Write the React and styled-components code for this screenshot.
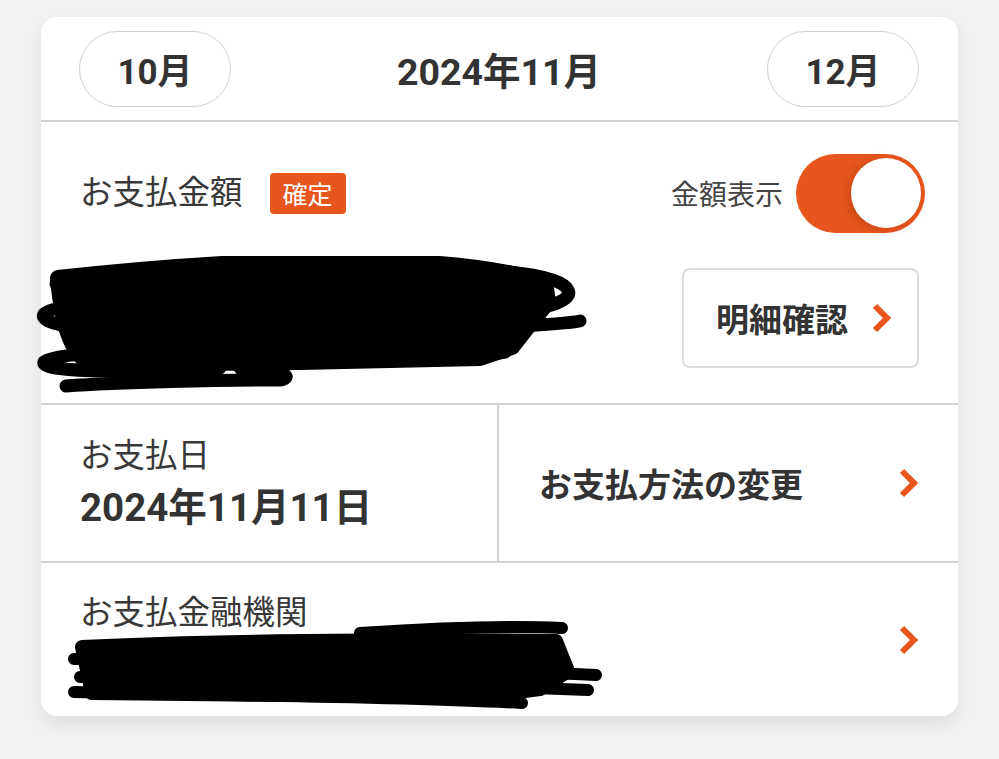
import React from "react";
import styled, { createGlobalStyle } from "styled-components";

const ORANGE = "#e8561e";

const GlobalStyle = createGlobalStyle`
  body {
    margin: 0;
    background: #f1f1f1;
    font-family: "Roboto", "Noto Sans CJK JP", sans-serif;
    color: #333;
  }
`;

const Page = styled.div`
  padding: 17px 0 40px 41px;
`;

const Card = styled.div`
  width: 917px;
  background: #fff;
  border-radius: 16px;
  box-shadow: 0 8px 16px rgba(0, 0, 0, 0.07);
  overflow: visible;
`;

const Header = styled.div`
  height: 103px;
  display: flex;
  align-items: center;
  justify-content: space-between;
  padding: 0 39px 0 38px;
  border-bottom: 2px solid #d2d2d2;
`;

const MonthPill = styled.button`
  width: 152px;
  height: 76px;
  border: 1.5px solid #d0d0d0;
  border-radius: 38px;
  background: #fff;
  font-family: inherit;
  font-size: 35px;
  font-weight: 700;
  color: #333;
  padding: 0;
`;

const Title = styled.div`
  font-size: 37.5px;
  font-weight: 700;
  color: #333;
`;

const AmountSection = styled.div`
  padding: 31px 0 35px 0;
  border-bottom: 2px solid #d2d2d2;
`;

const AmountTop = styled.div`
  height: 80px;
  display: flex;
  align-items: center;
  padding: 0 33px 0 39px;
`;

const Label = styled.div`
  font-size: 32.5px;
  line-height: ${p => p.$lh || 44}px;
  color: #383838;
`;

const Badge = styled.span`
  margin-left: 27px;
  height: 41px;
  padding: 0 13px;
  display: inline-flex;
  align-items: center;
  background: ${ORANGE};
  color: #fff;
  font-size: 25px;
  border-radius: 4px;
`;

const ToggleWrap = styled.div`
  margin-left: auto;
  display: flex;
  align-items: center;
  gap: 13px;
  font-size: 28px;
  color: #444;
`;

const Toggle = styled.div`
  width: 129px;
  height: 79px;
  border-radius: 40px;
  background: ${ORANGE};
  display: flex;
  align-items: center;
  justify-content: flex-end;
  padding-right: 4px;
  box-sizing: border-box;
`;

const Knob = styled.div`
  width: 70px;
  height: 70px;
  border-radius: 50%;
  background: #fff;
  box-shadow: -4px 2px 8px rgba(120, 30, 0, 0.25);
`;

const AmountBody = styled.div`
  margin-top: 35px;
  display: flex;
  align-items: flex-start;
  padding-right: 39px;
`;

const Scribble = styled.svg`
  display: block;
  margin: ${p => p.$margin};
  flex-shrink: 0;
`;

const DetailButton = styled.button`
  margin-left: auto;
  width: 237px;
  height: 100px;
  border: 2px solid #dcdcdc;
  border-radius: 8px;
  background: #fff;
  display: flex;
  align-items: center;
  justify-content: flex-end;
  gap: 24px;
  padding: 0 24px 0 0;
  font-family: inherit;
  font-size: 33px;
  font-weight: 700;
  color: #333;
`;

const SplitRow = styled.div`
  display: grid;
  grid-template-columns: 458px 1fr;
  height: 156px;
  border-bottom: 2px solid #d2d2d2;
`;

const DateCell = styled.div`
  border-right: 2px solid #d2d2d2;
  padding-left: 39px;
  display: flex;
  flex-direction: column;
  justify-content: center;
  gap: 6px;
`;

const DateValue = styled.div`
  font-size: 38.5px;
  line-height: 48px;
  font-weight: 700;
  color: #333;
`;

const LinkCell = styled.div`
  display: flex;
  align-items: center;
  justify-content: space-between;
  padding: 0 38px 0 40px;
  font-size: 33px;
  font-weight: 700;
  color: #333;
`;

const BankRow = styled.div`
  display: flex;
  align-items: center;
  padding: 0 38px 0 39px;
  height: 153px;
`;

const BankInfo = styled.div`
  display: flex;
  flex-direction: column;
  align-self: flex-start;
  padding-top: 30px;
`;

const ChevronSlot = styled.div`
  margin-left: auto;
  display: flex;
`;

const Chevron = () => (
  <svg width="21" height="30" viewBox="0 0 21 30">
    <polyline
      points="3,3 15,15 3,27"
      fill="none"
      stroke={ORANGE}
      strokeWidth="6"
      strokeLinejoin="miter"
    />
  </svg>
);

// redacted amount, hand scribble
const AmountScribble = () => (
  <Scribble
    $margin="-12px 0 -28px -5px"
    width="556"
    height="140"
    viewBox="36 254 556 140"
    fill="none"
    stroke="#000"
    strokeLinecap="round"
    strokeLinejoin="round"
  >
    <path
      d="M58 276 C150 266 250 258 350 258 C430 259 500 266 545 280 L548 300 L530 322 L512 345 L480 356 L300 360 L90 362 C70 350 62 320 58 276 Z"
      fill="#000"
      strokeWidth="16"
    />
    <g strokeWidth="13">
      <path d="M300 300 C200 298 60 296 44 312 C36 326 120 332 200 333" />
      <path d="M320 352 C200 350 60 346 44 360 C40 372 150 370 220 366" />
      <path d="M66 384 C120 380 220 378 280 378 C292 376 290 368 240 366" />
      <path d="M400 268 C480 266 560 270 568 288 C574 300 540 308 500 312" />
      <path d="M500 325 C540 323 565 322 580 319" />
      <path d="M300 360 C400 358 470 356 505 350" />
      <path d="M56 282 C60 272 100 270 200 270" />
    </g>
  </Scribble>
);

const BankScribble = () => (
  <Scribble
    $margin="-14px 0 0 -16px"
    width="540"
    height="94"
    viewBox="64 618 540 94"
    fill="none"
    stroke="#000"
    strokeLinecap="round"
    strokeLinejoin="round"
  >
    <path
      d="M82 646 C200 640 400 638 556 640 L568 670 L540 688 L480 696 L92 692 Z"
      fill="#000"
      strokeWidth="14"
    />
    <g strokeWidth="12">
      <path d="M360 632 C420 628 500 624 562 627" />
      <path d="M74 658 L300 656" />
      <path d="M80 676 L250 674" />
      <path d="M74 691 C200 694 380 695 522 702" />
      <path d="M420 672 C500 670 560 672 596 674" />
      <path d="M400 685 C480 685 540 687 588 689" />
    </g>
  </Scribble>
);

const App = () => {
  return (
    <Page>
      <GlobalStyle />
      <Card>
        <Header>
          <MonthPill>10月</MonthPill>
          <Title>2024年11月</Title>
          <MonthPill>12月</MonthPill>
        </Header>

        <AmountSection>
          <AmountTop>
            <Label>お支払金額</Label>
            <Badge>確定</Badge>
            <ToggleWrap>
              金額表示
              <Toggle>
                <Knob />
              </Toggle>
            </ToggleWrap>
          </AmountTop>
          <AmountBody>
            <AmountScribble />
            <DetailButton>
              明細確認
              <Chevron />
            </DetailButton>
          </AmountBody>
        </AmountSection>

        <SplitRow>
          <DateCell>
            <Label>お支払日</Label>
            <DateValue>2024年11月11日</DateValue>
          </DateCell>
          <LinkCell>
            お支払方法の変更
            <Chevron />
          </LinkCell>
        </SplitRow>

        <BankRow>
          <BankInfo>
            <Label $lh={40}>お支払金融機関</Label>
            <BankScribble />
          </BankInfo>
          <ChevronSlot>
            <Chevron />
          </ChevronSlot>
        </BankRow>
      </Card>
    </Page>
  );
};

export default App;
